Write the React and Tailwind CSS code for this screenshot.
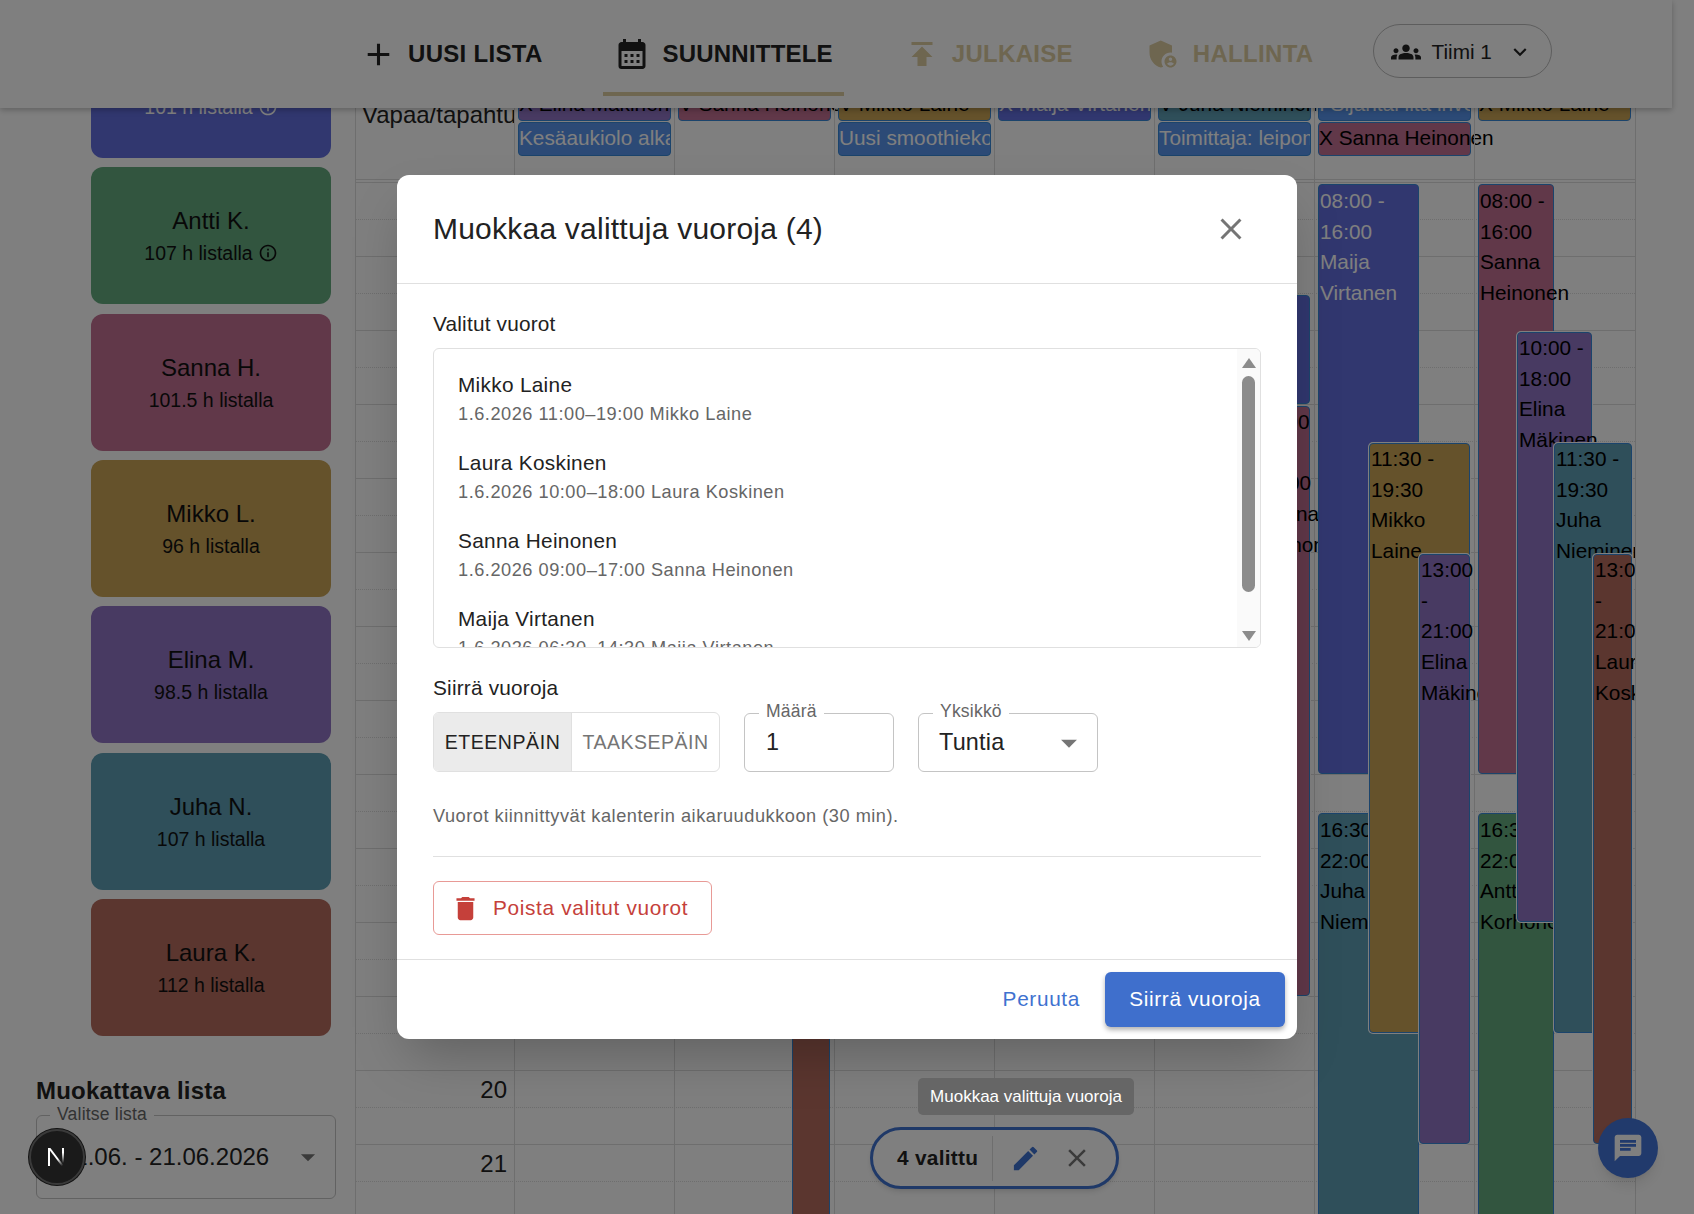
import React from "react";
import {
  MdAdd,
  MdAdminPanelSettings,
  MdArrowDropDown,
  MdCalendarMonth,
  MdChat,
  MdClose,
  MdDelete,
  MdEdit,
  MdExpandMore,
  MdGroups,
  MdInfoOutline,
  MdPublish,
} from "react-icons/md";

const staff = [
  { name: "Maija V.", hours: "101 h listalla", bg: "bg-[#626ede]", text: "text-white", info: true },
  { name: "Antti K.", hours: "107 h listalla", bg: "bg-[#64aa7e]", text: "text-[#111]", info: true },
  { name: "Sanna H.", hours: "101.5 h listalla", bg: "bg-[#c27092]", text: "text-[#111]" },
  { name: "Mikko L.", hours: "96 h listalla", bg: "bg-[#caa456]", text: "text-[#111]" },
  { name: "Elina M.", hours: "98.5 h listalla", bg: "bg-[#9074c4]", text: "text-[#111]" },
  { name: "Juha N.", hours: "107 h listalla", bg: "bg-[#5e9eb4]", text: "text-[#111]" },
  { name: "Laura K.", hours: "112 h listalla", bg: "bg-[#b66c5e]", text: "text-[#111]" },
];

const allDay = [
  [
    { label: "X Elina Mäkinen", bg: "bg-[#9074c4]" },
    { label: "Kesäaukiolo alkaa", bg: "bg-[#5894ec]", light: true },
  ],
  [{ label: "V Sanna Heinonen", bg: "bg-[#c27092]" }],
  [
    { label: "V Mikko Laine", bg: "bg-[#caa456]" },
    { label: "Uusi smoothiekone", bg: "bg-[#5894ec]", light: true },
  ],
  [{ label: "X Maija Virtanen", bg: "bg-[#626ede]", light: true }],
  [
    { label: "V Juha Nieminen", bg: "bg-[#5e9eb4]" },
    { label: "Toimittaja: leipomo", bg: "bg-[#5894ec]", light: true },
  ],
  [
    { label: "I Sijantai ilta inventaario", bg: "bg-[#5894ec]", light: true },
    { label: "X Sanna Heinonen", bg: "bg-[#c27092]" },
  ],
  [{ label: "X Mikko Laine", bg: "bg-[#caa456]" }],
];

// x positions are relative to the calendar's left edge
const events = [
  { x: 894, w: 60, start: 1.5, end: 3, bg: "bg-[#626ede]", time: "", name: "" },
  { x: 901, w: 53, start: 3, end: 11, bg: "bg-[#c27092]", time: "11:00 - 19:00", name: "Sanna Heinonen", inset: true },
  { x: 962, w: 101, start: 0, end: 8, bg: "bg-[#626ede]", time: "08:00 - 16:00", name: "Maija Virtanen", light: true },
  { x: 962, w: 101, start: 8.5, end: 14, bg: "bg-[#5e9eb4]", time: "16:30 - 22:00", name: "Juha Nieminen" },
  { x: 1013, w: 101, start: 3.5, end: 11.5, bg: "bg-[#caa456]", time: "11:30 - 19:30", name: "Mikko Laine", inset: true },
  { x: 1063, w: 51, start: 5, end: 13, bg: "bg-[#9074c4]", time: "13:00 - 21:00", name: "Elina Mäkinen", inset: true },
  { x: 1122, w: 76, start: 0, end: 8, bg: "bg-[#c27092]", time: "08:00 - 16:00", name: "Sanna Heinonen" },
  { x: 1122, w: 76, start: 8.5, end: 14, bg: "bg-[#64aa7e]", time: "16:30 - 22:00", name: "Antti Korhonen" },
  { x: 1161, w: 75, start: 2, end: 10, bg: "bg-[#9074c4]", time: "10:00 - 18:00", name: "Elina Mäkinen", inset: true },
  { x: 1198, w: 78, start: 3.5, end: 11.5, bg: "bg-[#5e9eb4]", time: "11:30 - 19:30", name: "Juha Nieminen", inset: true },
  { x: 1237, w: 39, start: 5, end: 13, bg: "bg-[#b66c5e]", time: "13:00 - 21:00", name: "Laura Koskinen", inset: true },
];

const selected = [
  { name: "Mikko Laine", detail: "1.6.2026 11:00–19:00 Mikko Laine" },
  { name: "Laura Koskinen", detail: "1.6.2026 10:00–18:00 Laura Koskinen" },
  { name: "Sanna Heinonen", detail: "1.6.2026 09:00–17:00 Sanna Heinonen" },
  { name: "Maija Virtanen", detail: "1.6.2026 06:30–14:30 Maija Virtanen" },
];

const hours = Array.from({ length: 15 }, (_, i) => i + 8);

const Header = () => (
  <header className="absolute left-0 top-0 z-10 flex h-[108px] w-[1672px] items-center bg-white pl-[360px] shadow-[0_2px_6px_rgba(0,0,0,0.25)]">
    <div className="flex items-center gap-[11px] text-[#222]">
      <MdAdd className="size-[37px]" />
      <span className="text-[24px] font-bold tracking-[0.3px]">UUSI LISTA</span>
    </div>
    <div className="ml-[60px] flex h-[84px] items-center gap-[13px] border-b-4 border-[#dccca0] pl-[11px] pr-[11px] pt-1 text-[#222]">
      <MdCalendarMonth className="size-[36px]" />
      <span className="text-[24px] font-bold tracking-[0.2px]">SUUNNITTELE</span>
    </div>
    <div className="ml-[60px] flex items-center gap-[12px] text-[#dccca0]">
      <MdPublish className="size-[36px]" />
      <span className="text-[24px] font-bold tracking-[0.3px]">JULKAISE</span>
    </div>
    <div className="ml-[72px] flex items-center gap-[12px] text-[#dccca0]">
      <MdAdminPanelSettings className="size-[36px]" />
      <span className="text-[24px] font-bold tracking-[0.3px]">HALLINTA</span>
    </div>
    <div className="ml-[60px] -mt-[6px] flex h-[54px] w-[179px] items-center rounded-[27px] border border-[#bbb] pl-[17px] pt-[2px] text-[#222]">
      <MdGroups className="size-[30px]" />
      <span className="ml-[10px] text-[20.8px]">Tiimi 1</span>
      <MdExpandMore className="ml-[15px] size-[26px]" />
    </div>
  </header>
);

const Sidebar = () => (
  <aside className="w-[355px] shrink-0 pt-[21px]">
    <div className="ml-[91px] flex w-[240px] flex-col gap-[9.35px]">
      {staff.map((s) => (
        <div
          key={s.name}
          className={`flex h-[137px] flex-col items-center justify-center rounded-[12px] ${s.bg} ${s.text}`}
        >
          <div className="mb-[1px] text-[24px] leading-[34px]">{s.name}</div>
          <div className="flex items-center gap-[5px] text-[19.5px] leading-[28px]">
            {s.hours}
            {s.info && <MdInfoOutline className="size-[20px]" />}
          </div>
        </div>
      ))}
    </div>
    <div className="ml-[36px] mt-[37px] w-[300px]">
      <h2 className="text-[24px] font-bold leading-[36px] tracking-[0.2px] text-[#222]">Muokattava lista</h2>
      <div className="relative mt-[6px] flex h-[84px] items-center rounded-[6px] border border-[#c4c4c4] pl-[24px] pr-[10px] text-[24px] text-[#222]">
        <span className="absolute -top-[12px] left-[13px] bg-white px-[7px] text-[17.55px] leading-[21px] tracking-[0.2px] text-[#666]">
          Valitse lista
        </span>
        <span className="flex-1">01.06. - 21.06.2026</span>
        <MdArrowDropDown className="size-[34px] text-[#757575]" />
      </div>
    </div>
  </aside>
);

const Calendar = () => (
  <main className="relative h-[1214px] w-[1281px] shrink-0 overflow-hidden border-x border-[#ddd]">
    {/* all-day rows */}
    <div className="flex h-[179px]">
      <div className="w-[159px] overflow-hidden whitespace-nowrap pl-[6px] pt-[97px] text-[24px] leading-[36px] text-[#222]">
        Vapaa/tapahtuma
      </div>
      {allDay.map((col, i) => (
        <div key={i} className="flex w-[160px] flex-col gap-[1px] pl-[3px] pr-[4px] pt-[87px]">
          {col.map((ev, row) => (
            <div
              key={ev.label}
              className={`h-[34px] shrink-0 whitespace-nowrap rounded-[4px] border border-[#3788d8] text-[20.8px] ${
                row === 0 ? "leading-[32px]" : "leading-[29px]"
              } ${ev.bg} ${ev.light ? "overflow-hidden text-white" : "text-black"}`}
            >
              {ev.label}
            </div>
          ))}
        </div>
      ))}
    </div>
    <div className="h-[4px] border-y border-[#ddd]" />

    {/* hour rows */}
    {hours.map((h) => (
      <div key={h} className="relative h-[74px] border-b border-[#ddd]">
        <div className="h-[37px] border-b border-dotted border-[#ddd]" />
        <span className="absolute right-[1128px] top-[1px] text-[24px] leading-[36px] text-[#222]">
          {h}
        </span>
      </div>
    ))}

    {/* day column lines */}
    <div className="absolute bottom-0 left-[158px] top-0 flex">
      {allDay.map((_, i) => (
        <div key={i} className="w-[160px] border-l border-[#ddd]" />
      ))}
    </div>

    {/* brown shift poking out under the dialog */}
    <div className="absolute left-[436px] top-[1000px] h-[300px] w-[38px] border-x border-[#3788d8] bg-[#b66c5e]" />

    {events.map((ev, i) => (
      <div
        key={i}
        className={`absolute rounded-[4px] border border-[#3788d8] px-[1px] text-[20.8px] leading-[30.7px] ${ev.bg} ${
          ev.light ? "text-white" : "text-black"
        } ${ev.inset ? "shadow-[0_0_0_1px_#fff]" : "pt-[1px]"}`}
        style={{
          left: ev.x,
          width: ev.w,
          top: 184 + ev.start * 74,
          height: (ev.end - ev.start) * 74 - 2,
        }}
      >
        <div>{ev.time}</div>
        <div>{ev.name}</div>
      </div>
    ))}
  </main>
);

const SelectionPill = () => (
  <div className="absolute left-[870px] top-[1127px] flex h-[62px] w-[249px] items-center rounded-[31px] border-[3px] border-[#3f72d0] bg-white shadow-md">
    <span className="ml-[24px] w-[95px] text-[20.8px] font-bold tracking-[0.3px] text-[#222]">4 valittu</span>
    <div className="h-[45px] w-px bg-[#ddd]" />
    <MdEdit className="ml-[17px] size-[31px] text-[#3f72d0]" />
    <MdClose className="ml-[21px] size-[30px] text-[#757575]" />
  </div>
);

const NextBadge = () => (
  <div className="absolute left-[29px] top-[1129px] z-40 flex size-[56px] items-center justify-center rounded-full border-2 border-[#3a3a3a] bg-[#1a1a1a] shadow-[0_0_0_1px_#111]">
    <svg className="-ml-[2px]" width="20" height="20" viewBox="0 0 20 20" fill="none">
      <defs>
        <linearGradient id="n-fade" x1="0.3" y1="0.2" x2="0.9" y2="1">
          <stop offset="0.5" stopColor="#fff" />
          <stop offset="1" stopColor="#fff" stopOpacity="0" />
        </linearGradient>
        <linearGradient id="n-side" x1="0" y1="0" x2="0" y2="1">
          <stop offset="0.3" stopColor="#fff" />
          <stop offset="1" stopColor="#fff" stopOpacity="0" />
        </linearGradient>
      </defs>
      <path d="M2 1h2v18H2z" fill="#fff" />
      <path d="M2 1h2.4L18 19h-2.4z" fill="url(#n-fade)" />
      <path d="M16 1h2v15h-2z" fill="url(#n-side)" />
    </svg>
  </div>
);

const Dialog = () => (
  <div className="absolute left-[397px] top-[175px] z-30 flex h-[864px] w-[900px] flex-col rounded-[12px] bg-white text-[#222] shadow-2xl">
    <div className="flex h-[109px] shrink-0 items-center justify-between border-b border-[#e0e0e0] pl-[36px] pr-[48px]">
      <h1 className="pb-[2px] text-[30px] tracking-[0.225px]">Muokkaa valittuja vuoroja (4)</h1>
      <MdClose className="size-[36px] text-[#757575]" />
    </div>

    <div className="flex-1 px-[36px] pt-[24px]">
      <div className="text-[20.8px] leading-[31px] tracking-[0.195px]">Valitut vuorot</div>
      <div className="mt-[9px] flex h-[300px] w-[828px] overflow-hidden rounded-[6px] border border-[#e0e0e0]">
        <ul className="flex-1 overflow-hidden pt-[10px]">
          {selected.map((s) => (
            <li key={s.name} className="px-[24px] py-[9.75px]">
              <div className="text-[20.8px] leading-[31.2px] tracking-[0.3px]">{s.name}</div>
              <div className="-mb-[1px] mt-[1px] text-[18.2px] leading-[27.3px] tracking-[0.52px] text-[#666]">{s.detail}</div>
            </li>
          ))}
        </ul>
        <div className="relative w-[23px] shrink-0 bg-[#fafafa]">
          <div className="absolute left-[5px] top-[9px] h-0 w-0 border-x-[7px] border-b-[10px] border-x-transparent border-b-[#8c8c8c]" />
          <div className="absolute left-[5px] top-[27px] h-[216px] w-[13px] rounded-full bg-[#8c8c8c]" />
          <div className="absolute bottom-[6px] left-[5px] h-0 w-0 border-x-[7px] border-t-[10px] border-x-transparent border-t-[#8c8c8c]" />
        </div>
      </div>

      <div className="mt-[24px] text-[20.8px] leading-[31px] tracking-[0.195px]">Siirrä vuoroja</div>
      <div className="mt-[9px] flex h-[60px] items-stretch">
        <div className="flex w-[287px] overflow-hidden rounded-[6px] border border-[#e0e0e0] pt-[2px] text-[19.5px]">
          <div className="-mt-[2px] flex w-[138px] items-center justify-center border-r border-[#e0e0e0] bg-[#ebebeb] pt-[2px] tracking-[0.56px]">
            ETEENPÄIN
          </div>
          <div className="flex flex-1 items-center justify-center tracking-[0.5px] text-[#757575]">TAAKSEPÄIN</div>
        </div>
        <div className="relative ml-[24px] mt-[1px] flex w-[150px] items-center rounded-[6px] border border-[#c4c4c4] pl-[21px] pt-[1px] text-[23.4px]">
          <span className="absolute -top-[13px] left-[14px] bg-white px-[7px] text-[17.55px] leading-[21px] tracking-[0.2px] text-[#666]">
            Määrä
          </span>
          1
        </div>
        <div className="relative ml-[24px] mt-[1px] flex w-[180px] items-center rounded-[6px] border border-[#c4c4c4] pl-[20px] pr-[9px] pt-[1px] text-[23.4px] tracking-[0.22px]">
          <span className="absolute -top-[13px] left-[14px] bg-white px-[7px] text-[17.55px] leading-[21px] tracking-[0.2px] text-[#666]">
            Yksikkö
          </span>
          <span className="flex-1">Tuntia</span>
          <MdArrowDropDown className="size-[38px] text-[#757575]" />
        </div>
      </div>

      <p className="mt-[31px] text-[18.2px] leading-[27px] tracking-[0.52px] text-[#666]">
        Vuorot kiinnittyvät kalenterin aikaruudukkoon (30 min).
      </p>
      <div className="mt-[26px] h-px bg-[#e0e0e0]" />
      <div className="mt-[24px] flex h-[54px] w-[279px] items-center rounded-[6px] border border-[#e89a96] pl-[16px] text-[20.8px] tracking-[0.65px] text-[#c5403a]">
        <MdDelete className="size-[31px]" />
        <span className="ml-[12px]">Poista valitut vuorot</span>
      </div>
    </div>

    <div className="flex h-[80px] shrink-0 items-center justify-end gap-[25px] border-t border-[#e0e0e0] pr-[12px]">
      <span className="pb-[2px] text-[20.8px] tracking-[0.65px] text-[#3f72d0]">Peruuta</span>
      <div className="flex h-[55px] w-[180px] items-center justify-center rounded-[6px] bg-[#3f6fcc] pb-[2px] text-[20.8px] tracking-[0.65px] text-white shadow-[0_3px_5px_rgba(0,0,0,0.3)]">
        Siirrä vuoroja
      </div>
    </div>
  </div>
);

export default function App() {
  return (
    <div className="relative h-[1214px] w-[1694px] overflow-hidden bg-white font-['Liberation_Sans',Arial,sans-serif]">
      <Header />
      <div className="flex">
        <Sidebar />
        <Calendar />
      </div>
      <SelectionPill />
      <button className="absolute left-[1598px] top-[1118px] flex size-[60px] items-center justify-center rounded-full bg-[#4274d8] text-white shadow-lg">
        <MdChat className="size-[32px]" />
      </button>

      {/* dialog backdrop */}
      <div className="absolute inset-0 z-20 bg-black/50" />
      <Dialog />

      <div className="absolute left-[918px] top-[1078px] z-40 flex h-[37px] w-[216px] items-center justify-center rounded-[5px] bg-[#666] text-[17px] text-white">
        Muokkaa valittuja vuoroja
      </div>

      <NextBadge />
    </div>
  );
}
